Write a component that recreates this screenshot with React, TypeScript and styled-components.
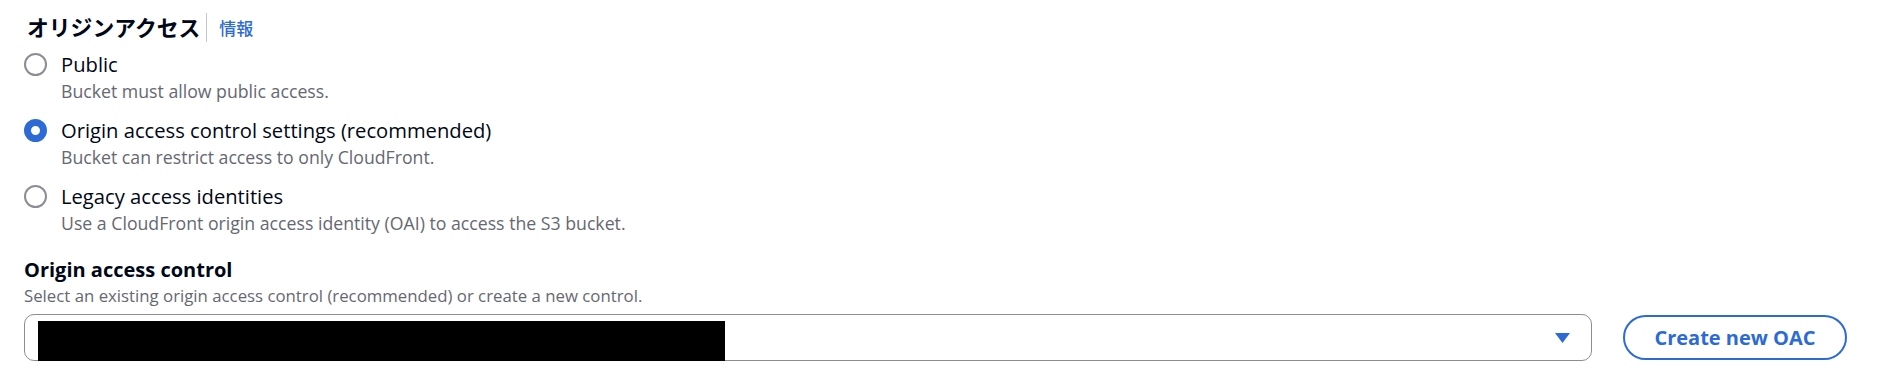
import React, { useState } from 'react'
import styled, { createGlobalStyle } from 'styled-components'

const GlobalStyle = createGlobalStyle`
  body {
    margin: 0;
    background: #ffffff;
    font-family: 'Open Sans', 'Noto Sans CJK JP', sans-serif;
    color: #000716;
  }
`

const options = [
  { value: 'public', label: 'Public', desc: 'Bucket must allow public access.' },
  {
    value: 'oac',
    label: 'Origin access control settings (recommended)',
    desc: 'Bucket can restrict access to only CloudFront.',
  },
  {
    value: 'oai',
    label: 'Legacy access identities',
    desc: 'Use a CloudFront origin access identity (OAI) to access the S3 bucket.',
  },
]

const App = () => {
  const [access, setAccess] = useState('oac')

  return (
    <Page>
      <GlobalStyle />
      <Header>
        <Title>オリジンアクセス</Title>
        <Divider />
        <InfoLink>情報</InfoLink>
      </Header>

      <RadioGroup>
        {options.map((o) => (
          <RadioItem key={o.value} onClick={() => setAccess(o.value)}>
            <Radio checked={access === o.value} />
            <RadioLabel>{o.label}</RadioLabel>
            <span />
            <RadioDesc>{o.desc}</RadioDesc>
          </RadioItem>
        ))}
      </RadioGroup>

      <Field>
        <FieldLabel>Origin access control</FieldLabel>
        <FieldDesc>Select an existing origin access control (recommended) or create a new control.</FieldDesc>
        <Row>
          <Select>
            <Redacted />
            <Caret viewBox="0 0 15 10">
              <path d="M0 0 H15 L7.5 10 Z" fill="#2c6bd6" />
            </Caret>
          </Select>
          <OutlineButton>Create new OAC</OutlineButton>
        </Row>
      </Field>
    </Page>
  )
}

export default App

const Page = styled.div`
  padding: 12px 53px 0 24px;
`

const Header = styled.div`
  display: flex;
  align-items: center;
  height: 30px;
`

const Title = styled.div`
  font-family: 'Noto Sans CJK JP', sans-serif;
  font-weight: 700;
  font-size: 21.8px;
  line-height: 30px;
  margin-left: 3px;
`

const Divider = styled.div`
  width: 1px;
  height: 29px;
  background: #c6c6cd;
  margin: 0 12px 0 6px;
`

const InfoLink = styled.a`
  font-family: 'Noto Sans CJK JP', sans-serif;
  font-weight: 500;
  font-size: 17px;
  color: #2c6bd6;
  cursor: pointer;
`

const RadioGroup = styled.div`
  display: flex;
  flex-direction: column;
  gap: 13px;
  margin-top: 8px;
`

const RadioItem = styled.label`
  display: grid;
  grid-template-columns: 23px 1fr;
  column-gap: 14px;
  align-items: center;
  cursor: pointer;
`

const Radio = styled.span<{ checked: boolean }>`
  box-sizing: border-box;
  width: 23px;
  height: 23px;
  border-radius: 50%;
  background: #ffffff;
  border: ${(p) => (p.checked ? '7.5px solid #2c6bd6' : '2px solid #8c8c94')};
`

const RadioLabel = styled.div`
  font-size: 20.2px;
  line-height: 29px;
`

const RadioDesc = styled.div`
  font-size: 17.7px;
  line-height: 24px;
  color: #656871;
`

const Field = styled.div`
  margin-top: 20px;
`

const FieldLabel = styled.div`
  font-size: 20px;
  line-height: 29px;
  font-weight: 700;
`

const FieldDesc = styled.div`
  font-size: 16.8px;
  line-height: 24px;
  color: #656871;
`

const Row = styled.div`
  display: flex;
  align-items: center;
  gap: 31px;
  margin-top: 6px;
`

const Select = styled.div`
  flex: 1;
  box-sizing: border-box;
  height: 47px;
  border: 1px solid #8c8c94;
  border-radius: 10px;
  display: flex;
  align-items: center;
  padding: 0 21px 0 13px;
`

const Redacted = styled.div`
  width: 687px;
  height: 40px;
  background: #000000;
  margin-top: 6px;
`

const Caret = styled.svg`
  width: 15px;
  height: 10px;
  margin-left: auto;
`

const OutlineButton = styled.button`
  box-sizing: border-box;
  height: 45px;
  width: 224px;
  border: 2.5px solid #2c6bd6;
  border-radius: 24px;
  background: #ffffff;
  color: #2c6bd6;
  font-family: 'Open Sans', sans-serif;
  font-weight: 700;
  font-size: 20px;
  cursor: pointer;
`
